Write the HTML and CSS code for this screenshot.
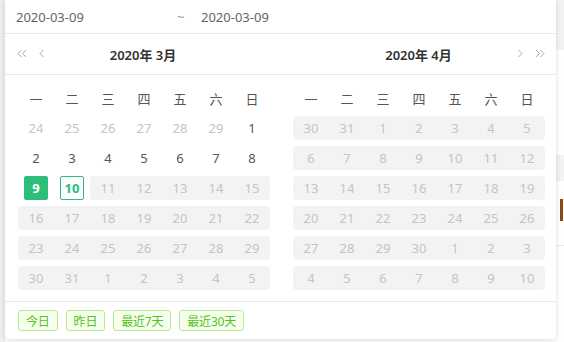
FILE: index.html
```html
<!DOCTYPE html>
<html lang="zh">
<head>
  <meta charset="UTF-8">
  <meta name="viewport" content="width=device-width, initial-scale=1.0">
  <title>日期范围</title>
  <link rel="stylesheet" href="styles.css">
</head>
<body>
  <div class="page-left"></div>

  <div class="picker">
    <div class="range-input">
      <span class="range-date">2020-03-09</span>
      <span class="range-sep">~</span>
      <span class="range-date">2020-03-09</span>
    </div>

    <div class="calendars">
      <div class="calendar">
        <div class="cal-header">
          <span class="nav nav-left">
            <svg width="10" height="9" viewBox="0 0 10 9"><path d="M4.5 1 L1 4.5 L4.5 8 M9 1 L5.5 4.5 L9 8" /></svg>
            <svg class="nav-single" width="6" height="9" viewBox="0 0 6 9"><path d="M4.5 1 L1 4.5 L4.5 8" /></svg>
          </span>
          <span class="cal-title">2020年 3月</span>
        </div>
        <div class="cal-body" id="calMarch"></div>
      </div>

      <div class="calendar">
        <div class="cal-header">
          <span class="cal-title">2020年 4月</span>
          <span class="nav nav-right">
            <svg class="nav-single" width="6" height="9" viewBox="0 0 6 9"><path d="M1.5 1 L5 4.5 L1.5 8" /></svg>
            <svg width="10" height="9" viewBox="0 0 10 9"><path d="M1 1 L4.5 4.5 L1 8 M5.5 1 L9 4.5 L5.5 8" /></svg>
          </span>
        </div>
        <div class="cal-body" id="calApril"></div>
      </div>
    </div>

    <div class="picker-footer">
      <button class="quick">今日</button>
      <button class="quick">昨日</button>
      <button class="quick">最近7天</button>
      <button class="quick">最近30天</button>
    </div>
  </div>

  <div class="page-right">
    <div class="bg-head"></div>
    <div class="bg-row"></div>
    <div class="bg-mark"></div>
    <div class="bg-line"></div>
  </div>

  <script>
    // Build both month grids: [label, kind]
    // kind: o = other month, n = normal, s = selected, t = today, r = disabled range
    var weekdays = ['一', '二', '三', '四', '五', '六', '日'];

    function buildMonth(el, days) {
      var html = '';
      weekdays.forEach(function (w) {
        html += '<div class="wk">' + w + '</div>';
      });
      days.forEach(function (d, i) {
        var cls = 'day day-' + d[1];
        if (d[1] === 'r') {
          var col = i % 7;
          var prev = i > 0 ? days[i - 1][1] : '';
          var next = i < days.length - 1 ? days[i + 1][1] : '';
          if (col === 0 || prev !== 'r') cls += ' r-start';
          if (col === 6 || next !== 'r') cls += ' r-end';
        }
        html += '<div class="' + cls + '"><span>' + d[0] + '</span></div>';
      });
      el.innerHTML = html;
    }

    var march = [];
    [24, 25, 26, 27, 28, 29].forEach(function (n) { march.push([n, 'o']); });
    for (var i = 1; i <= 8; i++) march.push([i, 'n']);
    march.push([9, 's']);
    march.push([10, 't']);
    for (i = 11; i <= 31; i++) march.push([i, 'r']);
    for (i = 1; i <= 5; i++) march.push([i, 'r']);

    var april = [[30, 'r'], [31, 'r']];
    for (i = 1; i <= 30; i++) april.push([i, 'r']);
    for (i = 1; i <= 10; i++) april.push([i, 'r']);

    buildMonth(document.getElementById('calMarch'), march);
    buildMonth(document.getElementById('calApril'), april);
  </script>
</body>
</html>
```

FILE: styles.css
```css
body {
  margin: 0;
  height: 342px;
  display: flex;
  background: #fff;
  font-family: "Noto Sans", "Noto Sans CJK SC", sans-serif;
  overflow: hidden;
}
.page-left {
  width: 5px;
  background: #eceef2;
}
.picker {
  width: 551px;
  height: 339px;
  background: #fff;
  border-radius: 0 0 4px 4px;
  box-shadow: 0 1px 5px rgba(0, 0, 0, 0.15);
  display: flex;
  flex-direction: column;
  position: relative;
  z-index: 1;
}
.page-right {
  flex: 1;
  display: flex;
  flex-direction: column;
}
.bg-head {
  height: 50px;
  background: #f3f3f3;
}
.bg-row {
  height: 26px;
  margin-top: 105px;
  background: #f3f3f3;
}
.bg-mark {
  width: 3px;
  height: 22px;
  margin: 18px 0 0 4px;
  background: #8a4a12;
}
.bg-line {
  height: 1px;
  margin-top: 24px;
  background: #e8e8e8;
}

/* range input */
.range-input {
  height: 33px;
  border-bottom: 1px solid #e8e8e8;
  display: flex;
  align-items: center;
  padding-left: 11px;
  font-size: 13px;
  color: #666;
}
.range-date:first-child {
  width: 161px;
}
.range-sep {
  width: 24px;
  color: #999;
}

/* calendars */
.calendars {
  display: flex;
}
.calendar {
  width: 276px;
}
.calendar + .calendar {
  width: 275px;
}
.cal-header {
  height: 40px;
  border-bottom: 1px solid #e8e8e8;
  display: flex;
  align-items: center;
  justify-content: center;
  position: relative;
}
.cal-title {
  font-size: 13px;
  font-weight: 600;
  color: #333;
}
.nav {
  position: absolute;
  top: 15px;
  display: flex;
  gap: 12px;
}
.nav-left {
  left: 12px;
}
.nav-right {
  right: 11px;
}
.nav svg {
  display: block;
}
.nav path {
  fill: none;
  stroke: #aaa;
  stroke-width: 1;
}
.cal-body {
  display: grid;
  grid-template-columns: repeat(7, 36px);
  grid-auto-rows: 30px;
  padding: 8px 0 8px 13px;
}
.calendar + .calendar .cal-body {
  padding-left: 12px;
}
.wk {
  font-size: 13px;
  color: #555;
  display: flex;
  align-items: center;
  justify-content: center;
}
.day {
  padding: 3px 0;
  font-size: 13px;
  display: flex;
  justify-content: center;
}
.day span {
  width: 24px;
  height: 24px;
  line-height: 24px;
  text-align: center;
  box-sizing: border-box;
  border-radius: 2px;
}
.day-o {
  color: #c4c4c4;
}
.day-n {
  color: #555;
}
.day-s span {
  background: #2dbe7b;
  color: #fff;
  font-weight: 700;
}
.day-t span {
  border: 1px solid #2dbe7b;
  color: #2dbe7b;
  font-weight: 700;
  line-height: 22px;
}
.day-r span {
  width: 36px;
  background: #f3f3f3;
  color: #c4c4c4;
  border-radius: 0;
}
.day-r.r-start span {
  border-top-left-radius: 4px;
  border-bottom-left-radius: 4px;
}
.day-r.r-end span {
  border-top-right-radius: 4px;
  border-bottom-right-radius: 4px;
}

/* footer */
.picker-footer {
  border-top: 1px solid #e8e8e8;
  padding: 8px 13px;
  display: flex;
  gap: 8px;
}
.quick {
  height: 21px;
  padding: 0 7px;
  font-family: inherit;
  font-size: 12px;
  letter-spacing: -0.2px;
  color: #52c41a;
  background: #f6ffed;
  border: 1px solid #b7eb8f;
  border-radius: 3px;
  cursor: pointer;
}
```
